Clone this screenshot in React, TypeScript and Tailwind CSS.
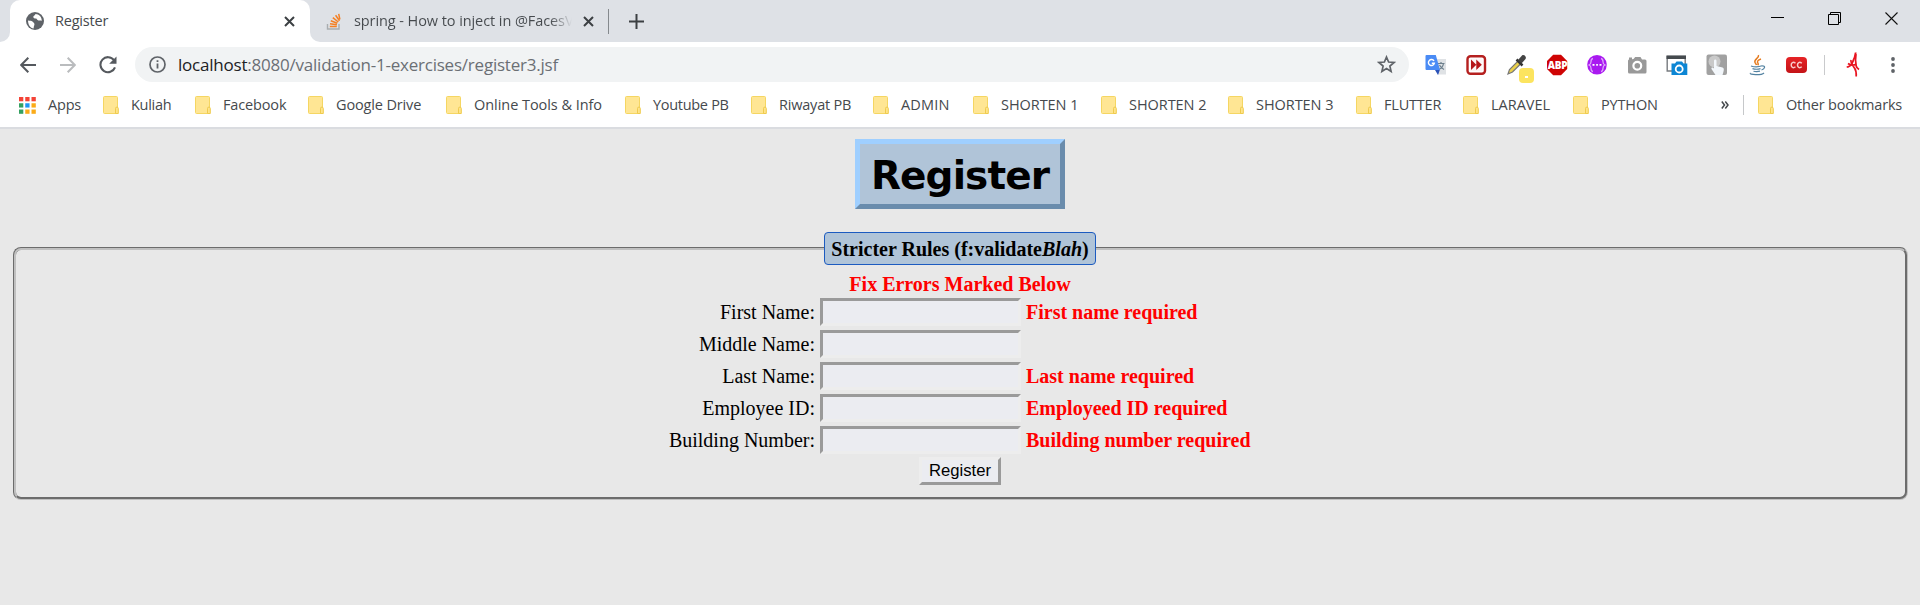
import React from "react";

const ui = "font-['Open_Sans','Noto_Sans',sans-serif]";

function Folder() {
  return (
    <svg className="block h-[18px] w-4 shrink-0" viewBox="0 0 16 18">
      <rect x=".5" y=".5" width="14" height="17" rx="1" fill="#ffe694" stroke="#f5d662" />
      <path d="M12.5 17.5v-5a1.3 1.3 0 0 1 2.8 0v5z" fill="#ffe48a" stroke="#efcb4e" />
    </svg>
  );
}

function Apps() {
  const c = ["#f44336", "#f44336", "#f44336", "#34a060", "#2196f3", "#fbab18", "#34a060", "#fbab18", "#fbab18"];
  return (
    <svg className="block h-[17px] w-[17px] shrink-0" viewBox="0 0 17 17">
      {c.map((f, i) => (
        <rect key={i} x={(i % 3) * 6.25} y={Math.floor(i / 3) * 6.25} width="4.3" height="4.3" fill={f} />
      ))}
    </svg>
  );
}

const bookmarks: [string, string][] = [
  ["Kuliah", "w-[64px] tracking-[-0.3px]"],
  ["Facebook", "w-[85px]"],
  ["Google Drive", "w-[110px]"],
  ["Online Tools & Info", "w-[151px] tracking-[-0.05px]"],
  ["Youtube PB", "w-[98px] tracking-[-0.3px]"],
  ["Riwayat PB", "w-[94px] tracking-[-0.2px]"],
  ["ADMIN", "w-[72px] tracking-[0.2px]"],
  ["SHORTEN 1", "w-[100px] tracking-[-0.05px]"],
  ["SHORTEN 2", "w-[99px] tracking-[-0.05px]"],
  ["SHORTEN 3", "w-[100px] tracking-[-0.05px]"],
  ["FLUTTER", "w-[79px] tracking-[-0.2px]"],
  ["LARAVEL", "w-[82px] tracking-[0px]"],
  ["PYTHON", "w-[120px]"],
];

function TabClose() {
  return (
    <svg className="block h-[11px] w-[11px] shrink-0" viewBox="0 0 11 11">
      <path d="M1 1l9 9M10 1l-9 9" stroke="#3c4043" strokeWidth="2" />
    </svg>
  );
}

function TabStrip() {
  return (
    <div className="flex h-[42px] bg-[#dee1e6]">
      <div className="flex h-full w-[10px] shrink-0 bg-white">
        <div className="h-full w-full rounded-br-[10px] bg-[#dee1e6]" />
      </div>
      <div className="bg-[#dee1e6]">
        <div className="flex h-full w-[300px] items-center rounded-t-[10px] bg-white pl-4">
          <svg className="block h-[18px] w-[18px]" viewBox="0 0 18 18">
            <circle cx="9" cy="9" r="9" fill="#5f6368" />
            <path d="M2 8.5c2 .2 4 .3 5 1.500s2 1.500 1.200 3.500c-.5 1.200-.4 2-.6 3C4.500 16 2 13 2 8.500zM9.500 2c-.2 1.500-2 1.300-2.200 2.700C7 6 8.800 6.500 10 6.500c1 0 1 1.800 2.400 2 1.300.2 2.300-.4 3.300.5C16 5 13 2.200 9.500 2z" fill="#fff" />
          </svg>
          <span className="ml-[11px] w-[229px] text-[14.500px] tracking-[-0.2px] text-[#45494d]">Register</span>
          <TabClose />
        </div>
      </div>
      <div className="flex h-full w-[299px] shrink-0 bg-white">
        <div className="flex h-full w-full items-center rounded-bl-[10px] bg-[#dee1e6] pl-4">
          <svg className="block h-[17px] w-4 shrink-0" viewBox="0 0 16 17">
            <path d="M1.500 11v5h11.500v-5" fill="none" stroke="#a9adb0" strokeWidth="1.400" />
            <path d="M3.800 13.500h7M4 10.700l6.900 1.100M4.800 7.700l6.500 2.500M6.800 4.700l5.500 4.300M9.600 2.200l3.900 5.500M12.700.8l1.200 5.500" stroke="#f48024" strokeWidth="1.500" />
          </svg>
          <span className="ml-3 w-[218px] shrink-0 overflow-hidden whitespace-nowrap bg-gradient-to-r from-[#45494d] from-90% to-transparent bg-clip-text text-[14.500px] tracking-[-0.08px] text-transparent">
            spring - How to inject in @FacesV
          </span>
          <div className="ml-[11px]"><TabClose /></div>
          <div className="ml-[14px] h-[25px] w-px bg-[#85898d]" />
        </div>
      </div>
      <svg className="ml-5 mt-[14px] block h-[15px] w-[15px]" viewBox="0 0 15 15">
        <path d="M7.500 0v15M0 7.500h15" stroke="#3c4043" strokeWidth="2" />
      </svg>
      <div className="ml-auto mr-[21px] flex gap-[43px] pt-3">
        <svg className="block h-[14px] w-[14px]" viewBox="0 0 14 14"><path d="M0 5.500h13" stroke="#000" /></svg>
        <svg className="block h-[14px] w-[14px]" viewBox="0 0 14 14"><path d="M.5 2.500h10v10H.5zM2.500 2.500V.5h10v10h-2" fill="none" stroke="#000" /></svg>
        <svg className="block h-[14px] w-[14px]" viewBox="0 0 14 14"><path d="M.5.5l12 12M12.500.5l-12 12" stroke="#111" strokeWidth="1.100" /></svg>
      </div>
    </div>
  );
}

function Extensions() {
  const s = "block h-[22px] w-[22px] shrink-0";
  return (
    <div className="ml-4 flex items-center gap-[18px]">
      <svg className={s} viewBox="0 0 22 22">
        <path d="M9 5h12v15.500h-8z" fill="#dfe2e5" />
        <path d="M13 9.500h6.500M16 8v1.500M18.500 9.500c-.5 3-2.500 5-4.500 6M14.500 11c1 2 2.500 3.500 4.500 4.500" fill="none" stroke="#6d7f8c" strokeWidth="1.200" />
        <path d="M1.500 1h9.300l4.200 15H1.500a1 1 0 0 1-1-1V2a1 1 0 0 1 1-1z" fill="#4a8bf5" />
        <path d="M10 16h4.800L13 21z" fill="#2a52b8" />
        <path d="M9 7A3 3 0 1 0 9.300 9.300H6.800" fill="none" stroke="#fff" strokeWidth="1.400" />
      </svg>
      <svg className={s} viewBox="0 0 22 22">
        <rect x="2.500" y="2.200" width="17.500" height="17.500" rx="3" fill="#fff" stroke="#b5201f" strokeWidth="2.400" />
        <rect x="5" y="4.500" width="12.500" height="12.500" rx="1" fill="#fdf5f5" />
        <path d="M6 5.500l5.300 5.300L6 16zM11.300 5.500l5.500 5.300-5.500 5.200z" fill="#b51518" />
      </svg>
      <div className="relative ml-px">
        <svg className={s} viewBox="0 0 22 22">
          <path d="M2 20l1.500-4.500L12 7l2.800 2.800L6.500 18z" fill="#ead04a" stroke="#777" strokeWidth="1.200" />
          <path d="M10.500 5.500l6 6" stroke="#333" strokeWidth="2.500" />
          <path d="M12 6l4-4.500c2-1.500 5 1.500 3.500 3.500L15.500 9.500z" fill="#444" />
        </svg>
        <div className="absolute left-[13px] top-[14px] flex h-[15px] w-[15px] items-center justify-center rounded-sm bg-[#fce45f]">
          <div className="mt-1 h-[2px] w-[3px] bg-white" />
        </div>
      </div>
      <div className="relative flex h-[22px] w-[22px] items-center justify-center">
        <svg className="absolute inset-0 h-[22px] w-[22px]" viewBox="0 0 22 22"><path d="M7.200.8h7.800L21.200 7v8L15 21.200H7.200L1 15V7z" fill="#cf0404" /></svg>
        <span className="relative ml-px font-['Open_Sans',sans-serif] text-[10px] font-extrabold leading-none tracking-[-0.3px] text-white">ABP</span>
      </div>
      <svg className={s} viewBox="0 0 22 22">
        <circle cx="11" cy="10.800" r="9.800" fill="#a91af0" />
        <path d="M7 4.500c-2 .3-2 1.500-2 3.300S4.500 10.500 3 11c1.500.5 2 1.500 2 3.200s0 3 2 3.300M15 4.500c2 .3 2 1.500 2 3.300s.5 2.700 2 3.200c-1.500.5-2 1.500-2 3.200s0 3-2 3.300" fill="none" stroke="#dca6fa" strokeWidth="1.300" />
        <path d="M6.500 10.800h2M10.200 10.800h1.700M13.500 10.800h2" stroke="#fff" strokeWidth="1.700" />
      </svg>
      <svg className={s} viewBox="0 0 22 22">
        <path d="M3 5.500V3.500h3v1.800L7.500 5l1.700-2h5.300L16 5.500h3A1.500 1.500 0 0 1 20.500 7v11a1.500 1.500 0 0 1-1.500 1.500H3.500A1.500 1.500 0 0 1 2 18V7a1.500 1.500 0 0 1 1-1.500z" fill="#999" />
        <circle cx="11.300" cy="11.800" r="3.900" fill="#999" stroke="#fff" strokeWidth="2.200" />
      </svg>
      <svg className={s} viewBox="0 0 22 22">
        <path d="M1.200 2.500h18V17h-18z" fill="#fff" stroke="#777b7f" strokeWidth="1.400" />
        <path d="M.5 1.500H20v3.500H.5z" fill="#454a4e" />
        <path d="M5.500 9.500H9l1.500-2H16l1.500 2h3.800V21H5.500z" fill="#0d86d4" />
        <circle cx="13.200" cy="15" r="3.500" fill="none" stroke="#fff" strokeWidth="1.800" />
      </svg>
      <svg className={s} viewBox="0 0 22 22">
        <rect x=".5" y=".5" width="20.500" height="20.500" rx="2" fill="#a1a1a1" />
        <circle cx="8.500" cy="7.500" r="6" fill="#c9c9c9" />
        <path d="M8 7c0-2 2.500-2 2.500 0v5l6 1.500c1.500.5 1.500 2 1 4L16.500 21h-7l-4-6c-.5-1.500 1-2 2.500-.5z" fill="#f3f7fb" />
      </svg>
      <svg className={s} viewBox="0 0 22 22">
        <path d="M12.500 1c1 3-5 4.500-3.500 7.500.4 1 1.200 1.500 1.500 2.500M15 5c-3 1-4.500 2.500-3 4.300.7.900.2 1.500-.3 2" fill="none" stroke="#e67d22" strokeWidth="1.500" />
        <path d="M5 12c3 1 8 1 11-.2M16 12c4-.5 3 3-.5 4M6.500 14.700c2.500.7 5.500.7 8 0M7.500 17.200c2 .6 4 .6 6.500 0M4.500 19c-2 2 11 2.500 13.500 0" fill="none" stroke="#5382a1" strokeWidth="1.200" />
      </svg>
      <div className="flex h-[16px] w-[21px] items-center justify-center rounded-[4px] bg-gradient-to-b from-[#e62326] to-[#c41317]">
        <svg className="h-2 w-[13px]" viewBox="0 0 13 8"><path d="M5.500 2.300C3 .2 1.200 2 1.200 4s1.800 3.800 4.300 1.700M11.800 2.300C9.300.2 7.500 2 7.500 4s1.800 3.800 4.300 1.700" fill="none" stroke="#f9caca" strokeWidth="1.500" /></svg>
      </div>
      <div className="-ml-px h-5 w-px bg-[#c9cacc]" />
      <svg className="ml-[3px] block h-[26px] w-[14px]" viewBox="0 0 14 26">
        <path d="M9.700.5c-.5 5-2.500 8-4 11.500S2 14 1 15.500" fill="none" stroke="#e81420" strokeWidth="1.900" />
        <path d="M10 2c-.7 4-.6 8 .2 12 .3 1.500 1.300 2.500 2.800 3.500M2 11.500c2.500 2 5.500 2 8.500.5M5 8c-.5 3 1.500 5 3.500 8s2 5 1.700 8.500" fill="none" stroke="#e81420" strokeWidth="1.700" />
      </svg>
      <svg className="ml-3 block h-4 w-[6px]" viewBox="0 0 6 16">
        <circle cx="3" cy="2" r="1.900" fill="#5f6368" /><circle cx="3" cy="8" r="1.900" fill="#5f6368" /><circle cx="3" cy="14" r="1.900" fill="#5f6368" />
      </svg>
    </div>
  );
}

function Toolbar() {
  return (
    <div className="flex h-[45px] items-center pl-5">
      <svg className="block h-4 w-4" viewBox="0 0 16 16"><path d="M16 8H1.500M8.300.8L1.200 8l7.100 7.200" fill="none" stroke="#55595e" strokeWidth="2" /></svg>
      <svg className="ml-6 block h-4 w-4" viewBox="0 0 16 16"><path d="M0 8h14.500M7.700.8L14.800 8l-7.100 7.200" fill="none" stroke="#babcbe" strokeWidth="2" /></svg>
      <svg className="ml-[23px] block h-[18px] w-[18px]" viewBox="0 0 18 18">
        <path d="M15 4.200A7.500 7.500 0 1 0 16 11.300" fill="none" stroke="#55595e" strokeWidth="2.100" />
        <path d="M17.500.5v7.300h-7.300z" fill="#55595e" />
      </svg>
      <div className="ml-[18px] flex h-[35px] w-[1274px] shrink-0 items-center rounded-full bg-[#f1f3f4] pl-[14px] pr-[13px]">
        <svg className="block h-[17px] w-[17px]" viewBox="0 0 17 17">
          <circle cx="8.500" cy="8.500" r="7.500" fill="none" stroke="#5f6368" strokeWidth="1.700" />
          <path d="M8.500 7.500v5M8.500 4.200v1.800" stroke="#5f6368" strokeWidth="1.800" />
        </svg>
        <span className="ml-[12px] whitespace-nowrap text-[17px] tracking-[-0.22px] text-[#6b6f74]"><span className="text-[#202124]">localhost</span>:8080/validation-1-exercises/register3.jsf</span>
        <svg className="ml-auto block h-[19px] w-[19px]" viewBox="0 0 19 19">
          <path d="M9.500 2l2.100 5 5.400.5-4.100 3.600 1.200 5.300-4.600-2.800-4.600 2.800 1.200-5.300L2 7.500 7.400 7z" fill="none" stroke="#5f6368" strokeWidth="1.700" />
        </svg>
      </div>
      <Extensions />
    </div>
  );
}

function BookmarksBar() {
  return (
    <div className="flex h-[40px] items-center pb-[4px] pl-[19px] text-[14.500px] tracking-[-0.15px] text-[#45494d]">
      <Apps />
      <span className="ml-3 w-[55px] shrink-0 tracking-[-0.2px]">Apps</span>
      {bookmarks.map(([t, w]) => (
        <div key={t} className="flex shrink-0 items-center">
          <Folder />
          <span className={`ml-3 shrink-0 whitespace-nowrap ${w}`}>{t}</span>
        </div>
      ))}
      <svg className="h-2 w-2 shrink-0" viewBox="0 0 8 8"><path d="M.8.5L3.500 4 .8 7.500M4.300.5L7 4 4.300 7.500" fill="none" stroke="#45494d" strokeWidth="1.500" /></svg>
      <div className="ml-[14px] mr-[14px] h-5 w-px shrink-0 bg-[#c6c8ca]" />
      <Folder />
      <span className="ml-3 whitespace-nowrap tracking-[-0.2px]">Other bookmarks</span>
    </div>
  );
}

const rows = [
  ["First Name:", "First name required"],
  ["Middle Name:", ""],
  ["Last Name:", "Last name required"],
  ["Employee ID:", "Employeed ID required"],
  ["Building Number:", "Building number required"],
];

export default function App() {
  return (
    <div className="h-[605px] w-[1920px] overflow-hidden bg-[#e8e8e8]">
      <div className={`h-[129px] border-b-2 border-[#dadce0] bg-white ${ui}`}>
        <TabStrip />
        <Toolbar />
        <BookmarksBar />
      </div>
      <main className="flex flex-col items-center pl-[13px] pr-[12px] pt-[10px] font-['Liberation_Serif',serif] text-[20px] leading-[23px] text-black">
        <h1 className="mr-px flex h-[70px] w-[210px] items-center justify-center border-[5px] border-b-[#6a8cac] border-l-[#9fcfff] border-r-[#6a8cac] border-t-[#9fcfff] bg-[#b0c4d8] pt-[3px] font-['DejaVu_Sans',sans-serif] text-[39px] font-bold tracking-[-0.9px]">
          Register
        </h1>
        <fieldset className="mt-[23px] h-[268px] w-full rounded-lg border-[3px] border-[#c0c0c0] pr-px [border-style:groove]">
          <legend className="mx-auto flex h-[33px] w-[272px] items-center justify-center whitespace-pre rounded border border-[#1c5bc0] bg-[#b0c4d8] pt-[2px] font-bold">
            Stricter Rules (f:validate<i>Blah</i>)
          </legend>
          <div className="flex flex-col items-center pt-[8px]">
            <div className="h-[23px] font-bold text-[#ff0000]">Fix Errors Marked Below</div>
            <div className="grid w-full grid-cols-[799px_201px_1fr] gap-x-[5px] gap-y-1 pt-[2px]">
              {rows.map(([l, e]) => (
                <React.Fragment key={l}>
                  <label className="pt-[3px] text-right">{l}</label>
                  <input aria-label={l} className="h-7 w-[201px] border-[3px] border-b-[#ededed] border-l-[#9a9a9a] border-r-[#ededed] border-t-[#9a9a9a] bg-[#ebecf1]" />
                  <span className="pt-[3px] font-bold text-[#ff0000]">{e}</span>
                </React.Fragment>
              ))}
            </div>
            <button className="mt-[3px] h-7 w-[82px] border-[3px] border-b-[#9a9a9a] border-l-[#ededed] border-r-[#9a9a9a] border-t-[#ededed] bg-[#ebecf1] font-['Liberation_Sans',sans-serif] text-[16.670px] leading-none">
              Register
            </button>
          </div>
        </fieldset>
      </main>
    </div>
  );
}
